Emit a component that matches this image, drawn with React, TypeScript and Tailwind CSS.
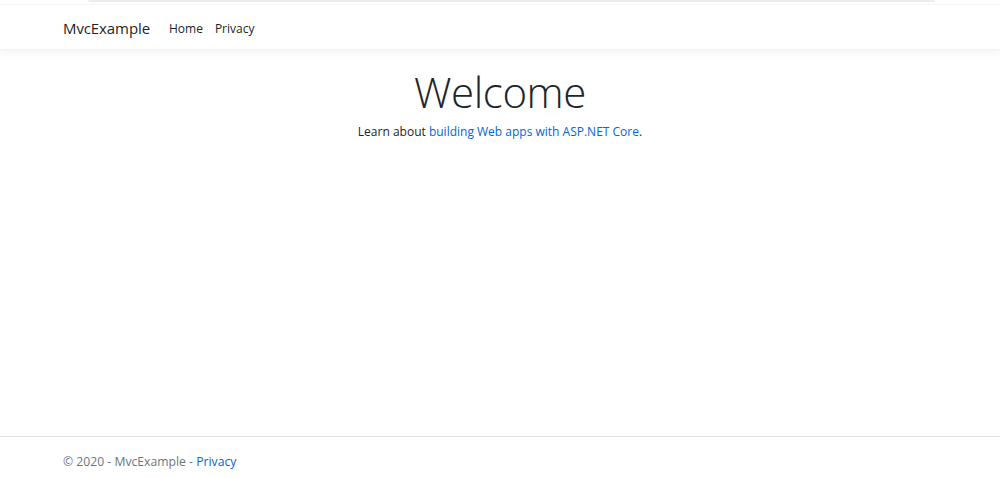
export default function App() {
    return (
        <div className="flex flex-col h-[478px] bg-white text-[#212529] font-['Open_Sans','Noto_Sans',sans-serif] overflow-hidden">
            <header className="relative z-10 bg-white border-b border-[#f2f2f2] shadow-[0_3px_8px_rgba(0,0,0,0.05)]">
                <div className="h-[2px] ml-[88px] mr-[65px] bg-[#ececec] rounded-b-full" />
                <div className="h-[3px] border-b border-[#f6f6f6]" />
                <nav className="flex items-center h-[44px] pt-[3px] px-[63px] gap-x-[19px]">
                    <a href="#" className="text-[15px] text-black/90 tracking-[-0.1px]">MvcExample</a>
                    <ul className="flex items-center gap-x-[12px] text-[12px] text-[#212529]">
                        <li><a href="#">Home</a></li>
                        <li><a href="#">Privacy</a></li>
                    </ul>
                </nav>
            </header>
            <main className="flex-1 flex flex-col items-center pt-[17px]">
                <h1 className="text-[42px] font-light leading-[1.2] tracking-[-0.4px] text-[#212529]">Welcome</h1>
                <p className="mt-[6px] text-[12px]">
                    Learn about <a href="#" className="text-[#0366d6]">building Web apps with ASP.NET Core</a>.
                </p>
            </main>
            <footer className="h-[42px] border-t border-[#dee2e6] flex items-start pt-[16px] px-[63px] text-[12.2px] text-[#6c757d]">
                <span>© 2020 - MvcExample - <a href="#" className="text-[#0366d6]">Privacy</a></span>
            </footer>
        </div>
    )
}
